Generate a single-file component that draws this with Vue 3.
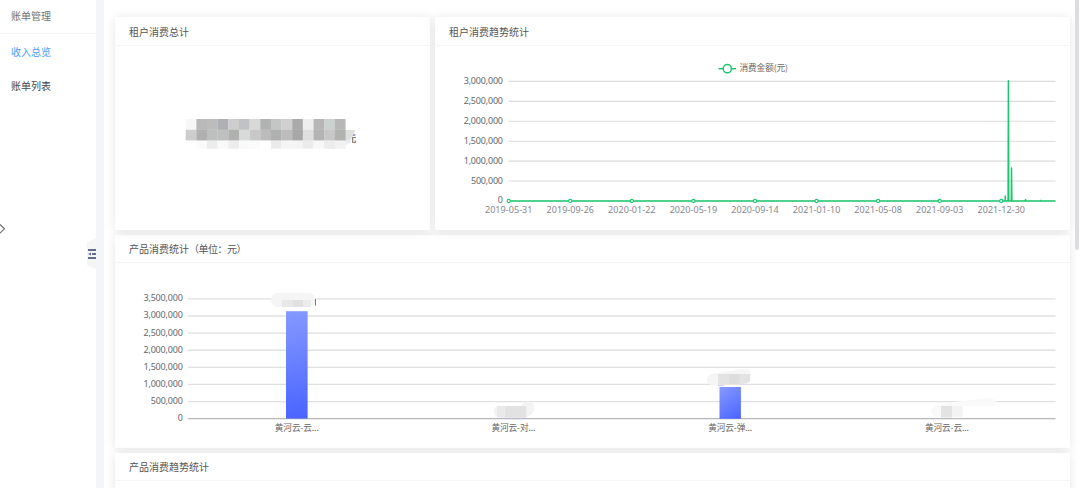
<template>
  <div class="layout">
    <aside class="sidebar">
      <div class="sidebar-title">账单管理</div>
      <ul class="menu">
        <li
          v-for="item in menus"
          :key="item"
          :class="{ active: item === activeMenu }"
          @click="activeMenu = item"
        >{{ item }}</li>
      </ul>
      <svg class="arrow" width="6" height="12" viewBox="0 0 6 12">
        <path d="M0 1.4 L4.5 5.8 L0 10.2" fill="none" stroke="#666" stroke-width="1.1" />
      </svg>
      <svg class="fold" width="9" height="32" viewBox="0 0 9 32">
        <path d="M9 0 L0 4 V27 L9 31 Z" fill="#f5f5f6" />
        <path d="M1 12 H9 M5 16 H9 M1 20 H9" stroke="#60708a" stroke-width="2" />
        <path d="M1 16 L4 14.6 V17.4 Z" fill="#60708a" />
      </svg>
    </aside>

    <main class="content">
      <div class="row">
        <section class="card total">
          <div class="card-header">租户消费总计</div>
          <svg class="chart" viewBox="115 46 315 184">
            <text x="347.3" y="142.3" class="unit">元</text>
            <path d="M334 130 H354 Q353 145 338 149 H330 V130 Z" fill="#efefef" />
            <path d="M344 130 H355 Q354 137 348 140.7 H344 Z" fill="#dedfdf" />
            <g v-for="(line, r) in mosaic" :key="r">
              <rect
                v-for="(c, i) in line"
                :key="i"
                :x="185.7 + i * 10.65"
                :y="[119, 129.8, 140.6][r]"
                width="10.75"
                :height="r === 2 ? 8.2 : 10.9"
                :fill="c"
              />
            </g>
            <path d="M353.5 134.6 h1.8 M352 137.6 h4 M352.6 142.2 v-4.4 M355.6 140.8 v1.4 h-2" fill="none" stroke="#777" stroke-width="0.8" />
          </svg>
        </section>

        <section class="card trend">
          <div class="card-header">租户消费趋势统计</div>
          <svg class="chart" viewBox="435 46 635 184">
            <g stroke="#1bc76e" stroke-width="1.5" fill="#fff">
              <path d="M718.5 68.7 H736" />
              <circle cx="727.3" cy="68.7" r="4.1" />
            </g>
            <text x="739.5" y="71.3" class="legend" textLength="48.5">消费金额(元)</text>
            <g v-for="(t, i) in trendTicks" :key="t">
              <path :d="`M508.5 ${81.4 + i * 19.93} H1055.5`" stroke="#dcdcde" stroke-width="1.1" />
              <text x="503" :y="83.9 + i * 19.93" class="tick" text-anchor="end" :textLength="tickWidth(t)">{{ t }}</text>
            </g>
            <g fill="none" stroke="#1bc76e" stroke-width="1.5" stroke-linejoin="round">
              <path d="M508.5 201 H1055.5" />
              <path d="M1005.2 201 V195.6 M1008.1 201 L1008.4 80.8 L1008.8 201 M1011.3 201 L1011.5 168 L1011.9 201" />
              <path d="M1025.6 201 V199 M1040.5 201 V199.8" />
            </g>
            <g v-for="(d, i) in dates" :key="d">
              <circle :cx="508.7 + i * 61.57" cy="201" r="1.6" fill="#fff" stroke="#1bc76e" stroke-width="1.1" />
              <text :x="508.7 + i * 61.57" y="213.3" class="date" text-anchor="middle" textLength="47.5">{{ d }}</text>
            </g>
          </svg>
        </section>
      </div>

      <section class="card product">
        <div class="card-header">产品消费统计<span class="header-unit">（单位：元）</span></div>
        <svg class="chart" viewBox="115 264 955 184">
          <defs>
            <linearGradient id="barTall" gradientUnits="userSpaceOnUse" x1="286" y1="311" x2="307" y2="418">
              <stop offset="0" stop-color="#8699ff" />
              <stop offset="1" stop-color="#4964ff" />
            </linearGradient>
            <linearGradient id="barShort" gradientUnits="userSpaceOnUse" x1="719.5" y1="387" x2="741" y2="419">
              <stop offset="0" stop-color="#8699ff" />
              <stop offset="1" stop-color="#4964ff" />
            </linearGradient>
          </defs>
          <g v-for="(t, i) in productTicks" :key="t">
            <path
              :d="`M188 ${298.9 + i * 17.11} H1055.5`"
              :stroke="t === '0' ? '#b7b8bd' : '#e0e0e2'"
              stroke-width="1.3"
            />
            <text x="182.8" :y="301.3 + i * 17.11" class="tick" text-anchor="end" :textLength="tickWidth(t)">{{ t }}</text>
          </g>
          <rect x="286" y="311.2" width="21.6" height="107.4" fill="url(#barTall)" />
          <rect x="719.5" y="387" width="21.4" height="31.8" fill="url(#barShort)" />
          <text
            v-for="(name, i) in products"
            :key="i"
            :x="296.8 + i * 216.7"
            y="430.8"
            class="category"
            text-anchor="middle"
            textLength="44"
          >{{ name }}</text>

          <g class="masks">
            <rect x="271" y="293" width="44.5" height="14" rx="7" fill="#f5f5f5" />
            <rect x="281.7" y="300" width="10.6" height="7" fill="#e8e8e8" />
            <rect x="292.3" y="300" width="10.7" height="7" fill="#e0e0e0" />
            <rect x="303" y="300" width="8" height="7" fill="#ebebeb" />
            <path d="M315.5 299 V305.5" stroke="#777" />

            <path d="M494 411 Q494 406 499 406 H520 L525 402 Q534 400 534.5 408 Q534 415 525 417.5 H499 Q494 417 494 411 Z" fill="#f3f3f3" />
            <rect x="504.7" y="406" width="21.5" height="11.8" fill="#e2e2e2" />
            <rect x="497" y="406" width="7.7" height="11.5" fill="#e9e9e9" />
            <path d="M503 418.6 H525" stroke="#b8bcd6" stroke-width="0.8" />

            <path d="M707 379 Q708 374 714 373.5 L735 370.5 Q750 367 751 374 Q751 382 742 384 L714 385.5 Q707 385 707 379 Z" fill="#f5f5f5" />
            <path d="M718 374 H750 V381 Q748 384 740 384 L718 385 Z" fill="#e3e3e3" />
            <rect x="729" y="374" width="10.5" height="9.8" fill="#dddddd" />
            <path d="M718 385.7 H724" stroke="#a9b1ef" stroke-width="0.7" />

            <path d="M931.5 411 Q933 405.5 938 405.3 L955 402 L988 398 Q996 398 996 403 Q996 405.5 990 406 H962.5 V416.5 L938 417.5 Q932 416 931.5 411 Z" fill="#f9f9f9" />
            <rect x="941" y="406" width="11" height="11.5" fill="#e3e3e3" />
            <rect x="952" y="406" width="10.5" height="11" fill="#f3f3f3" />
          </g>
        </svg>
      </section>

      <section class="card product-trend">
        <div class="card-header">产品消费趋势统计</div>
      </section>
      <div class="scrollbar"></div>
    </main>
  </div>
</template>

<script setup>
import { ref } from 'vue'

const menus = ['收入总览', '账单列表']
const activeMenu = ref('收入总览')

const trendTicks = ['3,000,000', '2,500,000', '2,000,000', '1,500,000', '1,000,000', '500,000', '0']
const productTicks = ['3,500,000', ...trendTicks]
const dates = [
  '2019-05-31', '2019-09-26', '2020-01-22', '2020-05-19', '2020-09-14',
  '2021-01-10', '2021-05-08', '2021-09-03', '2021-12-30'
]
const products = ['黄河云-云...', '黄河云-对...', '黄河云-弹...', '黄河云-云...']

// 金额打码色块
const mosaic = [
  ['#f7f7f7', '#b9b9b9', '#bcbcbc', '#aeb0b3', '#cdcdcd', '#c1c2c3', '#d8d8d8', '#b0b3b1', '#c3c6c5', '#d0d0d0', '#aaaaaa', '#eeeeee', '#b5b6b5', '#ccd0ce', '#b7b7b7'],
  ['#cbcecc', '#b0b0b0', '#bec0bf', '#bfbfbf', '#afb1af', '#d8dad9', '#c8c8c8', '#bcbcbc', '#afb1b0', '#bcbcbc', '#a7a7a7', '#dfdfdf', '#b4b4b4', '#c6c7c6', '#b1b3b1'],
  ['#ffffff', '#fafafa', '#ececec', '#f9f9f9', '#ededed', '#fafafa', '#fbfbfb', '#ffffff', '#ebebeb', '#f5f5f5', '#f4f4f4', '#ebebeb', '#f7f7f7', '#ececec', '#f2f2f2']
]

const tickWidth = (t) => ({ 9: 39.3, 7: 32, 1: 5 })[t.length]
</script>

<style>
body {
  margin: 0;
  overflow: hidden;
}
</style>

<style scoped>
.layout {
  display: flex;
  height: 488px;
  overflow: hidden;
  background: #f4f5f9;
  font-family: 'Noto Sans', 'Noto Sans CJK SC', sans-serif;
  font-size: 10px;
  color: #555;
}

.sidebar {
  position: relative;
  flex: 0 0 96px;
  margin-right: 8px;
  background: #fff;
  font-family: 'Noto Sans CJK SC', sans-serif;
}

.sidebar-title {
  height: 33px;
  padding-left: 11px;
  line-height: 32px;
  border-bottom: 1px solid #f5f5f6;
  color: #707070;
}

.menu {
  margin: 0;
  padding: 0;
  list-style: none;
}

.menu li {
  height: 34px;
  padding-left: 11px;
  line-height: 36px;
  color: #45464a;
  cursor: pointer;
}

.menu li.active {
  color: #409eff;
}

.arrow {
  position: absolute;
  left: 0;
  top: 223px;
}

.fold {
  position: absolute;
  right: 0;
  top: 238px;
}

.content {
  position: relative;
  flex: 1;
  min-width: 0;
  box-sizing: border-box;
  padding: 17px 10px 0 11px;
  background: #fff;
  overflow: hidden;
}

.row {
  display: flex;
  gap: 5px;
}

.card {
  height: 213px;
  margin-bottom: 5px;
  background: #fff;
  box-shadow: 0 1px 10px rgba(0, 0, 0, 0.1);
}

.total {
  width: 315px;
}

.trend {
  flex: 1;
}

.card-header {
  height: 28px;
  padding-left: 14px;
  line-height: 30px;
  border-bottom: 1px solid #f4f5f7;
  font-family: 'Noto Sans CJK SC', sans-serif;
}

.product .card-header,
.product-trend .card-header {
  height: 27px;
  line-height: 28px;
}

.product .chart {
  margin-top: 1px;
}

.header-unit {
  letter-spacing: -0.5px;
}

.chart {
  display: block;
  width: 100%;
  height: 184px;
}

.tick {
  font-size: 9px;
  fill: #66686c;
}

.date {
  font-size: 9px;
  fill: #85878e;
}

.legend,
.category,
.unit {
  font-family: 'Noto Sans CJK SC', sans-serif;
  font-size: 8.7px;
  fill: #666;
}

.scrollbar {
  position: absolute;
  right: 1px;
  top: 0;
  width: 4px;
  height: 250px;
  border-radius: 0 0 3px 3px;
  background: #dcdde0;
}
</style>
